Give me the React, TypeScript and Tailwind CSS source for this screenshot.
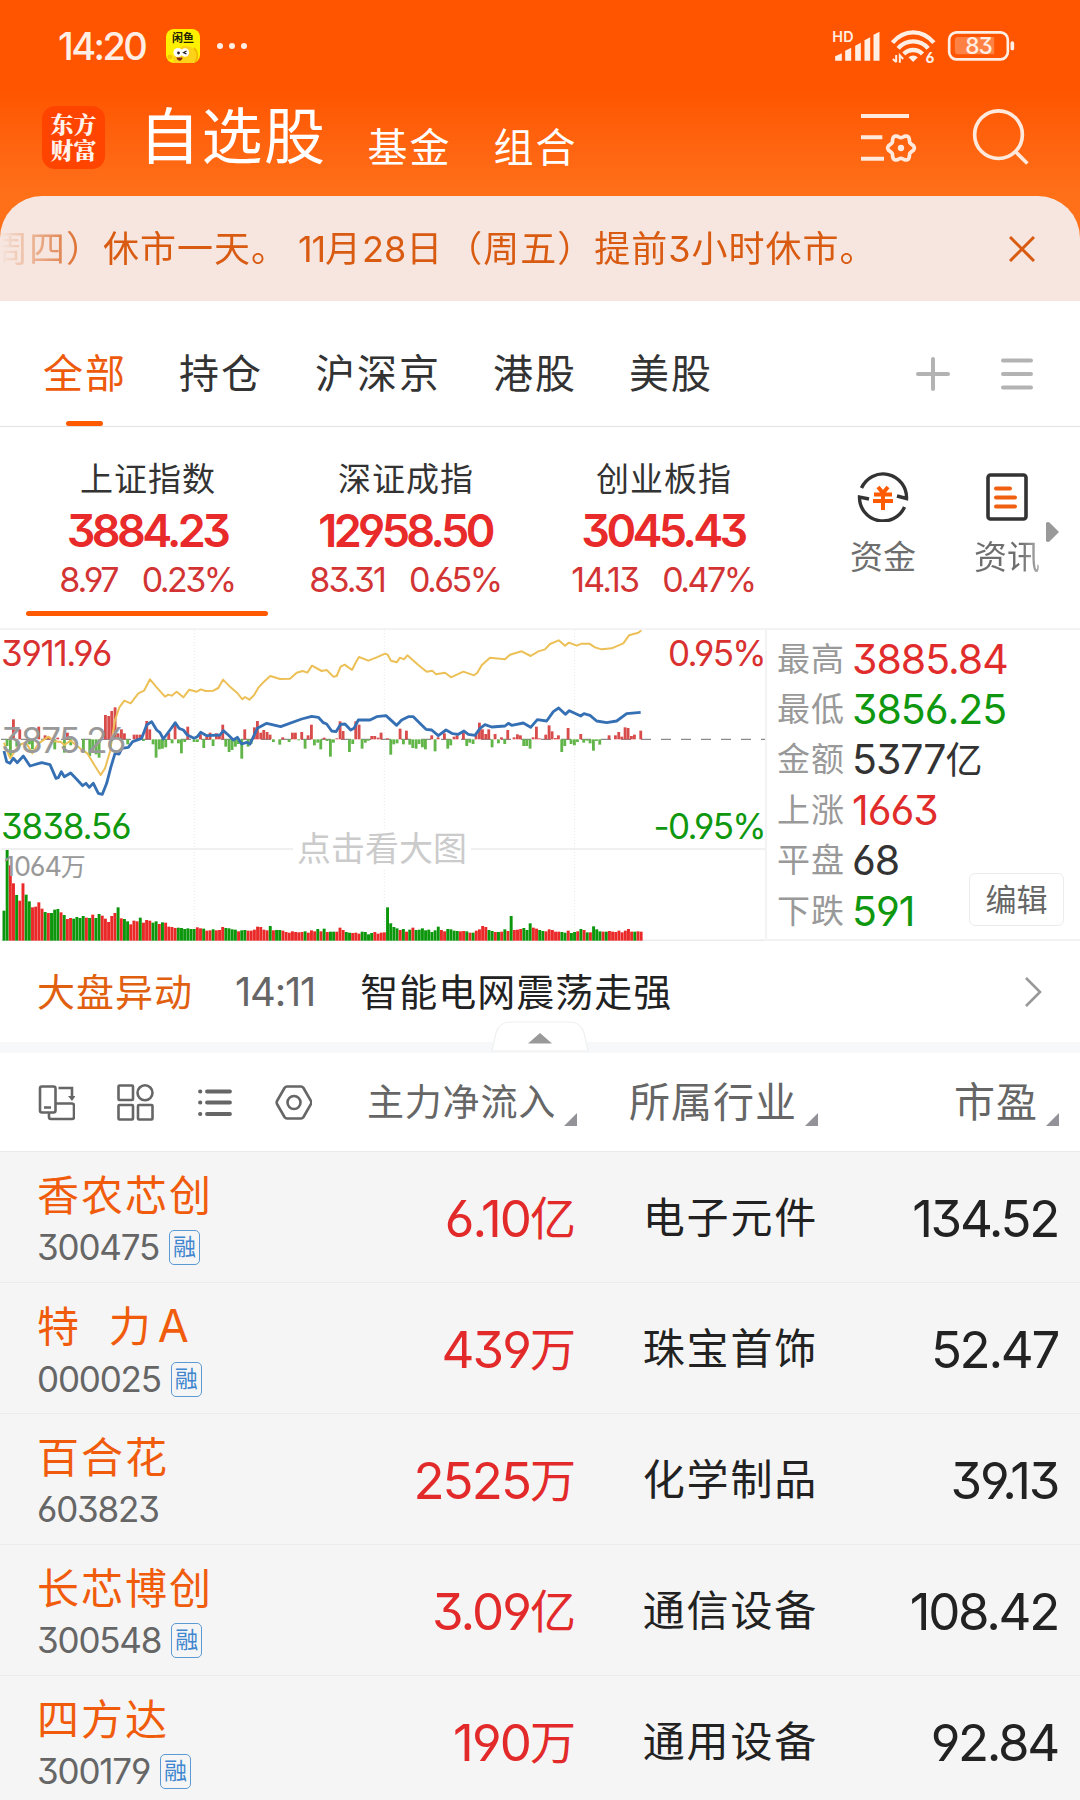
import React from "react";

const indexes = [
  { name: "上证指数", value: "3884.23", change: "8.97", percent: "0.23%", active: true },
  { name: "深证成指", value: "12958.50", change: "83.31", percent: "0.65%" },
  { name: "创业板指", value: "3045.43", change: "14.13", percent: "0.47%" },
];

const stats = [
  { label: "最高", value: "3885.84", color: "text-[#e12c2c]" },
  { label: "最低", value: "3856.25", color: "text-[#0f980f]" },
  { label: "金额", value: "5377", unit: "亿", color: "text-[#333333]" },
  { label: "上涨", value: "1663", color: "text-[#e12c2c]" },
  { label: "平盘", value: "68", color: "text-[#333333]" },
  { label: "下跌", value: "591", color: "text-[#0f980f]" },
];

const stocks = [
  { name: "香农芯创", code: "300475", margin: true, flow: "6.10", unit: "亿", industry: "电子元件", pe: "134.52" },
  { name: "特  力", suffix: "A", code: "000025", margin: true, flow: "439", unit: "万", industry: "珠宝首饰", pe: "52.47" },
  { name: "百合花", code: "603823", margin: false, flow: "2525", unit: "万", industry: "化学制品", pe: "39.13" },
  { name: "长芯博创", code: "300548", margin: true, flow: "3.09", unit: "亿", industry: "通信设备", pe: "108.42" },
  { name: "四方达", code: "300179", margin: true, flow: "190", unit: "万", industry: "通用设备", pe: "92.84" },
];

// one bar per minute, r = up, g = down
const volume =
  "g90 g272 r226 r172 g137 r120 r172 g138 g118 r100 r102 r115 r96 g86 r83 g83 g93 g95 r85 g77 r65 r68 g66 g71 g68 g74 r69 g68 r78 g68 g80 r75 r66 r56 r74 r83 g100 r67 g65 g58 r49 r60 r58 g69 r54 r62 r60 g54 g58 r50 g55 r54 r42 r41 r38 g39 g38 g35 g37 g35 g35 r40 r37 g36 r30 r31 g34 r31 r32 r41 g38 g37 g34 g33 r28 g31 g32 r30 r30 r33 r42 r41 r33 r31 g44 r31 g32 g32 r30 r26 r24 r28 r26 r25 r26 g28 r24 r31 r28 g35 r28 g36 r26 g27 g27 r27 r39 r32 g26 g24 r23 r24 r21 g27 g26 g19 g23 r26 r21 r24 r25 g100 g52 g41 g37 r32 g35 r27 g33 r39 g32 g33 g37 g31 g33 g26 g31 g42 r32 r28 g35 g34 g30 g29 r28 r29 g28 r24 g24 r30 r34 r44 r41 g32 g29 r26 g26 r27 g34 r29 g74 r32 r33 r35 g38 g32 g52 r39 r36 g32 g29 r28 r34 r32 r27 r27 g26 g24 r30 g23 g26 r28 g35 r32 g25 r25 g43 g34 g28 r27 g27 r29 r27 r26 r30 r25 r30 r35 r27 g27 r28 r27";

// [x, height] of the bars around the zero line
const momentum = [
  [21, -20], [31, -50], [40, 60], [50, -22], [59, 30], [88, -15], [97, -30], [116, 38], [135, 12], [145, 5], [164, -30], [173, 5], [193, -40], [202, 20], [212, -18], [250, -35], [269, -50], [278, -35], [288, -45], [297, -55],
  [316, 73], [326, 70], [335, 85], [345, 96], [354, 18], [364, 30], [373, 18], [383, -15], [402, 14], [411, 14], [421, 14], [430, -5], [440, 55], [449, 30], [459, -15], [468, -55], [478, -30], [487, -28], [497, -24], [506, 20],
  [516, -12], [525, 48], [535, -12], [544, -42], [554, -8], [563, 38], [582, -8], [592, -8], [601, 15], [611, -26], [620, 8], [630, 20], [639, -20], [649, 18], [658, 16], [668, 44], [677, -22], [687, -38], [696, -32], [706, -22],
  [715, -14], [725, -58], [734, 30], [744, -22], [753, -14], [763, 36], [772, 55], [782, 20], [791, 28], [801, 22], [810, 14], [820, -8], [839, -16], [848, 6], [867, -8], [877, 20], [886, 20], [896, -3], [905, 22], [915, -28],
  [924, 12], [934, 44], [943, -18], [953, -10], [962, -30], [972, 5], [981, -5], [991, -52], [1000, -10], [1010, 3], [1020, 54], [1029, 25], [1048, -38], [1058, -14], [1067, 54], [1077, 44], [1086, -28], [1096, -10], [1105, -4],
  [1115, 10], [1124, 10], [1134, 5], [1143, 20], [1162, 3], [1172, -46], [1181, -15], [1191, -12], [1200, 32], [1210, -15], [1219, 26], [1229, -16], [1238, -26], [1248, -28], [1257, -14], [1267, -24], [1276, -30], [1295, 12],
  [1305, -36], [1314, 6], [1333, 18], [1343, -28], [1352, -18], [1362, 8], [1371, 12], [1390, 20], [1400, -20], [1409, -10], [1419, -14], [1428, 14], [1438, 50], [1447, 30], [1457, 16], [1466, 30], [1476, -24], [1485, 16], [1495, -12],
  [1504, 6], [1514, -14], [1523, 28], [1542, 6], [1552, 15], [1561, 12], [1571, -20], [1580, -20], [1590, -28], [1599, 6], [1609, 38], [1618, 3], [1637, 14], [1647, 42], [1656, 24], [1666, 4], [1675, 12], [1685, -38], [1694, -20],
  [1704, 34], [1713, -14], [1723, -18], [1732, -8], [1742, 16], [1751, -10], [1761, -4], [1770, -12], [1780, -34], [1789, -5], [1799, -16], [1827, 12], [1846, 12], [1856, 22], [1865, 8], [1875, 36], [1884, 34], [1894, 10], [1903, 14], [1922, 26],
];

const yellowLine =
  "12,368 20,390 31,415 50,385 64,372 78,368 97,400 116,370 145,350 164,364 183,366 193,375 212,362 240,385 262,400 283,435 302,465 315,445 330,395 345,300 358,262 373,242 392,250 415,220 432,212 450,178 470,202 495,230 505,224 515,227 530,215 550,232 568,209 590,215 603,208 617,213 640,212 655,204 669,179 690,200 712,219 727,238 735,231 748,239 762,226 775,203 790,187 811,168 840,177 870,176 890,158 908,153 922,158 936,137 965,153 980,150 1000,170 1010,168 1022,140 1034,134 1056,150 1068,126 1077,111 1105,122 1130,112 1155,101 1163,104 1173,122 1190,127 1200,113 1212,118 1222,106 1255,135 1280,155 1297,152 1308,163 1335,158 1353,172 1390,155 1422,166 1432,158 1445,136 1470,113 1515,118 1530,104 1565,94 1592,108 1615,94 1635,88 1650,72 1676,61 1695,77 1707,68 1730,77 1745,71 1768,71 1785,82 1805,88 1835,85 1870,70 1887,46 1915,38 1924,31";

const blueLine =
  "12,393 20,425 30,430 40,415 52,428 70,408 90,438 125,428 150,434 168,475 175,473 184,455 193,470 212,459 230,478 248,497 258,490 268,502 280,490 295,520 307,523 320,490 333,440 345,400 357,402 366,385 385,382 398,365 425,355 440,315 455,305 470,330 480,338 490,357 510,330 526,308 537,325 550,330 562,345 582,355 592,350 602,337 620,347 660,345 670,332 685,345 700,360 712,352 725,372 740,367 750,372 772,325 800,310 842,320 905,297 935,289 955,292 970,308 980,312 995,333 1008,335 1022,313 1035,312 1052,330 1062,325 1075,300 1110,300 1130,290 1158,287 1190,316 1205,300 1225,290 1240,290 1258,308 1278,328 1295,330 1315,347 1338,330 1358,341 1375,343 1392,333 1405,343 1425,346 1440,325 1455,314 1475,321 1515,318 1525,310 1535,316 1570,309 1592,322 1612,299 1640,303 1660,275 1676,264 1696,283 1708,272 1742,288 1752,281 1770,286 1790,303 1820,308 1850,303 1880,281 1922,277";

const gearPath =
  Array.from({ length: 73 }, (_, i) => {
    const a = (i * 5 * Math.PI) / 180;
    const r = 35.5 + 4.5 * Math.cos(6 * a);
    return `${i ? "L" : "M"}${(243 + r * Math.cos(a)).toFixed(1)} ${(383 + r * Math.sin(a)).toFixed(1)}`;
  }).join("") + "Z";

const StatusBar = () => {
  return (
    <div className="flex h-[92px] items-center pr-[63px] pl-[58px] text-[#ffeee4]">
      <span className="w-[92px] text-[38px] leading-none font-medium tracking-[-2.600px]">14:20</span>
      <div className="ml-[16px] flex h-[34px] w-[34px] flex-col items-center overflow-hidden rounded-lg bg-[#fff000]">
        <span className="mt-[4px] text-[11px] leading-[11px] font-bold text-[#222200]">闲鱼</span>
        <svg viewBox="0 0 34 19" className="h-[19px] w-[34px]">
          <path d="M8 19C5 10 12 2 20 2c8 0 12 7 9 17z" fill="#ffd21a" />
          <path d="M28 4c4 4 4 10 1 15" stroke="#f5b400" strokeWidth="2" fill="none" />
          <circle cx="4" cy="13" r="2.5" fill="#f7c600" />
          <circle cx="12" cy="8.5" r="4.6" fill="#fff" />
          <circle cx="19" cy="8.5" r="4.2" fill="#fff" />
          <circle cx="12.5" cy="9" r="1.4" fill="#222" />
          <path d="M20.5 7l-3 1.6 3 1.4" stroke="#222" strokeWidth="1.2" fill="none" />
          <path d="M10.5 13.5h6c0 4-5 4.5-6 0z" fill="#8a2a12" />
        </svg>
      </div>
      <div className="ml-[17px] flex gap-[6px]">
        <i className="h-[6px] w-[6px] rounded-full bg-[#ffeee4]" />
        <i className="h-[6px] w-[6px] rounded-full bg-[#ffeee4]" />
        <i className="h-[6px] w-[6px] rounded-full bg-[#ffeee4]" />
      </div>
      <svg viewBox="30 20 560 114" className="ml-auto h-[38px] w-[187px]" fill="#ffeee4">
        <text x="36" y="65" fontSize="43" fontWeight="600" className="tracking-[1px]">HD</text>
        <path d="M45 121V108l20-9v22zM75 121V91l18-9v39zM105 121V76l17-9v54zM133 121V60l17-9v70zM160 121V43l18-9v87z" />
        <g fill="none" stroke="#ffeee4" strokeWidth="13">
          <path d="M217 67Q243 36 279 36T341 67" />
          <path d="M234 84Q252 63 279 63T324 84" />
          <path d="M251 101Q262 89 279 89T307 101" />
        </g>
        <path d="M265 111q14-11 28 0l-14 14z" />
        <path d="M228 104v22M218 116l10 9M239 127v-22l10 11" fill="none" stroke="#ffeee4" strokeWidth="6" />
        <text x="316" y="127" fontSize="44" fontWeight="700">6</text>
        <rect x="387" y="36" width="176" height="81" rx="22" fill="none" stroke="#ffeee4" strokeWidth="8" />
        <path d="M414 50H522V102H414a10 10 0 0 1-10-10V60a10 10 0 0 1 10-10z" fill="#ff8143" />
        <rect x="571" y="63" width="11" height="27" rx="5" />
        <text x="435" y="100" fontSize="68" fontWeight="500" className="tracking-[-3px]">83</text>
      </svg>
    </div>
  );
};

const NavBar = () => {
  return (
    <div className="flex h-[90px] items-center pr-[50px] pl-[42px] text-white">
      <div className="flex h-[63px] w-[63px] flex-col items-center justify-center rounded-[13px] bg-[#ff4400] font-['Noto_Serif_CJK_SC','Noto_Sans_CJK_SC',serif] text-[23px] leading-[26px] font-black text-[#fff3ec]">
        <span>东方</span>
        <span>财富</span>
      </div>
      <span className="mt-px ml-[34px] text-[61px] leading-none tracking-[1.500px]">自选股</span>
      <span className="mt-[21px] ml-[41px] text-[40px] leading-none tracking-[2px]">基金</span>
      <span className="mt-[21px] ml-[42px] text-[40px] leading-none tracking-[2px]">组合</span>
      <svg viewBox="120 266 180 168" className="ml-auto h-[56px] w-[60px]" fill="none" stroke="#ffe9dc" strokeWidth="12">
        <path d="M123 287H267M123 351H187M123 415H192" />
        <path d={gearPath} strokeWidth="11" />
        <circle cx="243" cy="383" r="9.5" fill="#ffe9dc" stroke="none" />
      </svg>
      <svg viewBox="455 260 175 180" className="ml-[52px] h-[60px] w-[58px]" fill="none" stroke="#ffe9dc" strokeWidth="11">
        <circle cx="535" cy="343" r="72" />
        <path d="M586 394L622 430" />
      </svg>
    </div>
  );
};

const Notice = () => {
  return (
    <div className="mt-[14px] flex h-[105px] items-center justify-between overflow-hidden rounded-t-[42px] bg-[#f6e6df] pr-[45px] text-[#d95b12]">
      <p className="ml-[-8px] flex [mask-image:linear-gradient(to_right,transparent_8px,black_100px)] text-[36px] leading-none tracking-[1px] whitespace-nowrap">
        <span>周四）休市一天。</span>
        <span className="ml-[10px]">
          <span className="tracking-[-1.200px]">11</span>月<span className="tracking-normal">28</span>日<span className="ml-[3px]">（周五）</span>提前3小时休市。
        </span>
      </p>
      <svg viewBox="0 0 26 26" className="h-[26px] w-[26px]" stroke="#d95b12" strokeWidth="3">
        <path d="M1 1L25 25M25 1L1 25" />
      </svg>
    </div>
  );
};

const Tabs = () => {
  return (
    <div className="flex h-[126px] items-end border-b border-[#e3e3e3] pr-[46px] pl-[43px] text-[#333333]">
      <div className="flex gap-[52px] text-[40px] leading-[42px] tracking-[2px]">
        <div className="flex flex-col items-center text-[#ee5a0c]">
          <span>全部</span>
          <i className="mt-[26px] mr-[2px] h-[5px] w-[37px] rounded-full bg-[#ff5a00]" />
        </div>
        <span>持仓</span>
        <span>沪深京</span>
        <span>港股</span>
        <span>美股</span>
      </div>
      <svg viewBox="0 0 34 34" className="mb-[35px] ml-auto h-[34px] w-[34px]" stroke="#b3b3b3" strokeWidth="4" strokeLinecap="round">
        <path d="M17 2V32M2 17H32" />
      </svg>
      <svg viewBox="0 0 34 34" className="mb-[35px] ml-[50px] h-[34px] w-[34px]" stroke="#b3b3b3" strokeWidth="4" strokeLinecap="round">
        <path d="M3 3.5H31M3 17H31M3 30.5H31" />
      </svg>
    </div>
  );
};

const IndexCards = () => {
  return (
    <div className="relative flex h-[201px] pl-[18px]">
      {indexes.map((item) => (
        <div key={item.name} className="flex w-[258px] flex-col items-center pt-[35px]">
          <span className="pl-[2px] text-[33px] leading-[34px] tracking-[1px] text-[#333333]">{item.name}</span>
          <span className="mt-[12px] text-[45px] leading-[46px] font-semibold tracking-[-3.600px] text-[#e82a2a]">{item.value}</span>
          <div className="mt-[9px] flex gap-[24px] text-[34px] leading-[34px] tracking-[-1.900px] text-[#d23434]">
            <span>{item.change}</span>
            <span className="tracking-[-2.500px]">{item.percent}</span>
          </div>
          {item.active && <i className="mt-[14px] h-[5px] w-[242px] rounded-full bg-[#ff5a00]" />}
        </div>
      ))}
      <div className="ml-[29px] flex w-[124px] flex-col items-center pt-[45px]">
        <svg viewBox="0 0 52 50" className="h-[50px] w-[52px]" fill="none" stroke="#333" strokeWidth="3.4">
          <path d="M4.5 16A23.5 23.5 0 0 1 49.5 26.5L40 24" />
          <path d="M47.5 35A23.5 23.5 0 0 1 2.5 25L12 27" />
          <path d="M21 15L26 21L31 15M17 22.5H35M16 29H36M26 21V38" stroke="#ff5a00" strokeWidth="4" />
        </svg>
        <span className="mt-[18px] text-[33px] leading-[34px] text-[#6e6e6e]">资金</span>
      </div>
      <div className="flex w-[124px] flex-col items-center pt-[45px]">
        <svg viewBox="0 0 44 50" className="h-[50px] w-[44px]" fill="none" stroke="#333" strokeWidth="3.6">
          <rect x="3" y="3" width="38" height="44" rx="2.5" />
          <path d="M11 16.5H25M11 25.5H30M11 34.5H30" stroke="#f06010" strokeWidth="4" strokeLinecap="round" />
        </svg>
        <span className="mt-[18px] bg-linear-to-r from-[#6e6e6e] from-70% to-[#b0b0b0] bg-clip-text text-[33px] leading-[34px] text-transparent">资讯</span>
      </div>
      <svg viewBox="0 0 13 20" className="absolute top-[95px] right-[21px] h-[20px] w-[13px]">
        <path d="M0 1Q2-1 4 1L13 10L4 19Q2 21 0 19z" fill="#999" />
      </svg>
    </div>
  );
};

const Chart = () => {
  return (
    <div className="relative h-full w-[765px]">
      <svg viewBox="0 30 2295 933" className="h-[311px] w-[765px]" fill="none">
        <path d="M583 30V962M1153 30V962M1724 30V962" stroke="#e8e8e8" strokeWidth="3" strokeDasharray="3 6" />
        <path d="M3 687H2295M3 961H2295" stroke="#ececec" strokeWidth="5" />
        <path d="M3 358H2295" stroke="#8a8a8a" strokeWidth="4" strokeDasharray="30 30" />
        {momentum.map(([x, h]) => (
          <rect key={x} x={x - 4} y={h > 0 ? 358 - h : 358} width="8.5" height={Math.abs(h)} fill={h > 0 ? "#d94c4c" : "#62b548"} />
        ))}
        {volume.split(" ").map((bar, i) => {
          const h = Number(bar.slice(1));
          return <rect key={i} x={7.5 + i * 9.51} y={962 - h} width="8.8" height={h} fill={bar[0] === "r" ? "#ea2929" : "#0c960c"} />;
        })}
        <polyline points={yellowLine} stroke="#ecc056" strokeWidth="6" strokeLinejoin="round" />
        <polyline points={blueLine} stroke="#3670b4" strokeWidth="8.5" strokeLinejoin="round" />
      </svg>
      <div className="absolute top-[5px] left-px text-[35px] leading-[36px] tracking-[-1.300px] text-[#d93030]">3911.96</div>
      <div className="absolute top-[92px] left-px text-[35px] leading-[36px] tracking-[-1.600px] text-[#999999]">3875.26</div>
      <div className="absolute top-[178px] left-px text-[35px] leading-[36px] tracking-[-1.100px] text-[#0f980f]">3838.56</div>
      <div className="absolute top-[223px] left-[4px] text-[27px] leading-[28px] tracking-[-1.100px] text-[#999999]">
        1064<span className="text-[25px]">万</span>
      </div>
      <div className="absolute top-[5px] right-0 text-[35px] leading-[36px] tracking-[-1.700px] text-[#d93030]">0.95%</div>
      <div className="absolute top-[178px] right-0 text-[35px] leading-[36px] tracking-[-1.700px] text-[#0f980f]">-0.95%</div>
      <div className="absolute top-[199px] left-[293px] w-[178px] bg-white text-center text-[34px] leading-[40px] text-[#cbcbcb]">点击看大图</div>
    </div>
  );
};

const MarketPanel = () => {
  return (
    <div className="flex h-[313px] border-t-2 border-[#f3f3f3]">
      <Chart />
      <div className="relative flex-1 border-b-2 border-l-2 border-[#f3f3f3] pt-[4px] pl-[10px]">
        {stats.map((s) => (
          <div key={s.label} className="flex h-[50.400px] items-center">
            <span className="w-[75px] text-[33px] leading-none tracking-[1px] text-[#999999]">{s.label}</span>
            <span className={`text-[41px] leading-none tracking-[-1px] ${s.color}`}>
              {s.value}
              {s.unit && <span className="text-[37px]">{s.unit}</span>}
            </span>
          </div>
        ))}
        <button className="absolute right-[16px] bottom-[13px] h-[53px] w-[95px] rounded-md border border-[#ececec] bg-white text-[31px] leading-none text-[#666666]">
          编辑
        </button>
      </div>
    </div>
  );
};

const Ticker = () => {
  return (
    <>
      <div className="flex h-[101px] items-center pr-[38px] pl-[37px] leading-none">
        <span className="text-[38px] tracking-[1px] text-[#e0600f]">大盘异动</span>
        <span className="ml-[42px] text-[40px] tracking-[-1.200px] text-[#666666]">14:11</span>
        <span className="ml-[45px] text-[38px] tracking-[1px] text-[#222222]">智能电网震荡走强</span>
        <svg viewBox="0 0 18 30" className="ml-auto h-[30px] w-[18px]" fill="none" stroke="#999" strokeWidth="2.6">
          <path d="M2 1L16 15L2 29" />
        </svg>
      </div>
      <div className="relative h-[11px] bg-[#f7f8fa]">
        <svg viewBox="0 0 98 31" className="absolute bottom-px left-[491px] h-[31px] w-[98px]">
          <path d="M1 30L5 12Q8 1 19 1H79Q90 1 93 12L97 30z" fill="#fff" stroke="#f0f0f0" strokeWidth="1.2" />
          <path d="M37 22.5L49 12L61 22.5z" fill="#999" />
        </svg>
      </div>
    </>
  );
};

const Corner = () => (
  <svg viewBox="0 0 13 13" className="mt-[35px] h-[13px] w-[13px]">
    <path d="M13 0V13H0z" fill="#929298" />
  </svg>
);

const TableHead = () => {
  return (
    <div className="flex h-[99px] items-center border-b border-[#e9e9e9] pr-[21px] pl-[38px] leading-none text-[#666666]">
      <div className="flex gap-[42px]">
        <svg viewBox="0 0 37 37" className="h-[37px] w-[37px]" fill="none" stroke="#666" strokeWidth="2.6">
          <rect x="2" y="2.5" width="15.5" height="26" rx="2" />
          <path d="M6 23.5H13M20.5 4H34V12M18 19.5H34Q36 19.5 36 21.5V33Q36 35 34 35H13Q11 35 11 33V29" />
          <path d="M30 12H37.500L34 17z" fill="#666" stroke="none" />
        </svg>
        <svg viewBox="0 0 37 37" className="h-[37px] w-[37px]" fill="none" stroke="#666" strokeWidth="2.6">
          <rect x="1.5" y="1.5" width="14.5" height="14.5" rx="1" />
          <circle cx="28" cy="8.8" r="7.5" />
          <rect x="1.5" y="21" width="14.5" height="14.5" rx="1" />
          <rect x="21" y="21" width="14.5" height="14.5" rx="1" />
        </svg>
        <svg viewBox="0 0 37 37" className="h-[37px] w-[37px]" fill="none" stroke="#666" strokeWidth="3.8" strokeLinecap="round">
          <path d="M11 7.5H34M11 18.5H34M11 30H34M4 7.5h.4M4 18.5h.4M4 30h.4" />
        </svg>
        <svg viewBox="0 0 37 37" className="h-[37px] w-[37px]" fill="none" stroke="#666" strokeWidth="2.6" strokeLinejoin="round">
          <path d="M12 2.5H26Q27.5 2.5 28.5 4L36 17Q36.6 18.5 36 20L28.5 33Q27.5 34.5 26 34.5H12Q10.5 34.5 9.5 33L2 20Q1.3 18.5 2 17L9.5 4Q10.5 2.5 12 2.5z" />
          <circle cx="19" cy="18.5" r="6.5" />
        </svg>
      </div>
      <div className="ml-auto flex w-[262px] items-center justify-end gap-[8px]">
        <span className="text-[37px] tracking-[0.800px]">主力净流入</span>
        <Corner />
      </div>
      <div className="flex w-[241px] items-center justify-end gap-[8px]">
        <span className="text-[41px] tracking-[1px]">所属行业</span>
        <Corner />
      </div>
      <div className="flex w-[241px] items-center justify-end gap-[8px]">
        <span className="text-[41px] tracking-[1px]">市盈</span>
        <Corner />
      </div>
    </div>
  );
};

const StockList = () => {
  return (
    <div>
      {stocks.map((s) => (
        <div key={s.code} className="flex h-[131px] items-center border-b border-[#ebebeb] bg-[#f5f5f5] pt-[2px] pr-[22px] pl-[37px] text-[#222222]">
          <div className="flex w-[260px] flex-col gap-[12px] pt-[3px]">
            <span className="text-[42px] leading-[44px] tracking-[2px] whitespace-pre text-[#f05c0c]">
              {s.name}
              {s.suffix && <span className="ml-[5px] text-[45px]">{s.suffix}</span>}
            </span>
            <div className="flex h-[36px] items-center">
              <span className="text-[35px] leading-none tracking-[-1.200px] text-[#666666]">{s.code}</span>
              {s.margin && (
                <span className="ml-[10px] flex h-[35px] w-[31px] items-center justify-center rounded-[5px] border-[1.500px] border-[#5b9ad5] text-[23px] leading-none text-[#3f86cf]">融</span>
              )}
            </div>
          </div>
          <div className="flex flex-1 items-center justify-end leading-none text-[#e32a2a]">
            <span className="text-[51px] tracking-[-1.900px]">{s.flow}</span>
            <span className="text-[46px]">{s.unit}</span>
          </div>
          <span className="w-[242px] text-right text-[42px] leading-none tracking-[1.800px]">{s.industry}</span>
          <span className="w-[240px] text-right text-[51px] leading-none tracking-[-2.300px]">{s.pe}</span>
        </div>
      ))}
    </div>
  );
};

export default function App() {
  return (
    <div className="h-[1800px] w-[1080px] overflow-hidden bg-white font-['Inter','Noto_Sans_CJK_SC',sans-serif] [font-feature-settings:'cv09','cv03','cv04']">
      <div className="bg-linear-to-b from-[#ff5500] from-30% to-[#ff7019] to-65%">
        <StatusBar />
        <NavBar />
        <Notice />
      </div>
      <Tabs />
      <IndexCards />
      <MarketPanel />
      <Ticker />
      <TableHead />
      <StockList />
    </div>
  );
}
